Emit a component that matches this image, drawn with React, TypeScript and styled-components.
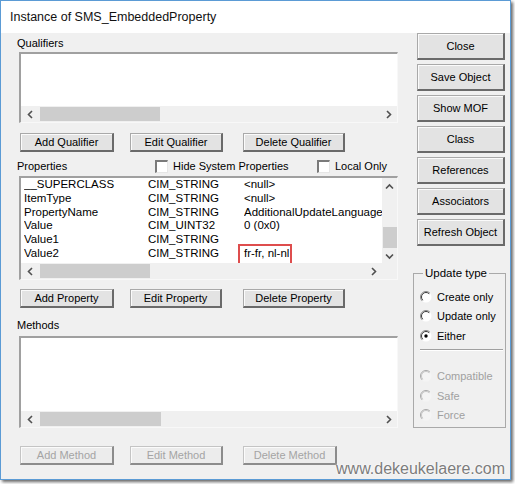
import React from "react";
import styled, { createGlobalStyle } from "styled-components";

const Global = createGlobalStyle`
  html, body { margin: 0; padding: 0; background: #fff; }
  body { font-family: "Liberation Sans", Arial, sans-serif; font-size: 11px; color: #000; }
  * { box-sizing: border-box; }
`;

const Page = styled.div`
  width: 515px;
  height: 484px;
  position: relative;
  background: #fff;
  overflow: hidden;
`;

const Window = styled.div`
  width: 511px;
  height: 480px;
  border: 1px solid #5b9bd5;
  box-shadow: 2px 2px 3px rgba(0, 0, 0, 0.6);
  display: flex;
  flex-direction: column;
  background: #f0f0f0;
`;

const TitleBar = styled.div`
  height: 32px;
  flex: none;
  background: #fff;
  padding-left: 9px;
  display: flex;
  align-items: center;
  font-size: 12.5px;
  color: #111;
`;

const Body = styled.div`
  flex: 1;
  display: grid;
  grid-template-columns: 383px 94px;
  column-gap: 13px;
  padding-left: 16px;
  align-items: start;
`;

const LeftCol = styled.div`
  display: flex;
  flex-direction: column;
`;

const Label = styled.div<{ $top: number }>`
  margin-top: ${(p) => p.$top}px;
  line-height: 14px;
  height: 14px;
`;

const ListBox = styled.div<{ $h: number; $top: number; $vscroll?: boolean }>`
  margin-top: ${(p) => p.$top}px;
  margin-left: 2px;
  width: 379px;
  height: ${(p) => p.$h}px;
  background: #fff;
  border-style: solid;
  border-width: 2px 1px 1px 2px;
  border-color: #a0a0a0 #f8f8f8 #f8f8f8 #a0a0a0;
  display: grid;
  grid-template-columns: ${(p) => (p.$vscroll ? "1fr 15px" : "1fr")};
  grid-template-rows: 1fr 16px;
  overflow: hidden;
`;

const Rows = styled.div`
  overflow: hidden;
  font-size: 11.5px;
`;

const Row = styled.div`
  display: grid;
  grid-template-columns: 124px 96px 1fr;
  padding-left: 3px;
  height: 13.8px;
  line-height: 13.8px;
  white-space: nowrap;
`;

const Cell = styled.div`
  overflow: hidden;
`;

const Boxed = styled.span`
  position: relative;
  display: inline-block;
  &::after {
    content: "";
    position: absolute;
    top: -3px;
    bottom: -4px;
    left: -6px;
    right: -3px;
    border: 2px solid #de4d4d;
  }
`;

const HScroll = styled.div`
  background: #f0f0f0;
  display: flex;
  align-items: center;
  height: 16px;
`;

const ArrowBox = styled.div<{ $w: number; $h?: number }>`
  width: ${(p) => p.$w}px;
  height: ${(p) => p.$h ?? 16}px;
  flex: none;
  display: flex;
  align-items: center;
  justify-content: center;
`;

const HThumb = styled.div<{ $w: number }>`
  width: ${(p) => p.$w}px;
  height: 14px;
  margin-left: 1px;
  background: #cdcdcd;
  flex: none;
`;

const Spacer = styled.div`
  flex: 1;
`;

const VScroll = styled.div`
  background: #f0f0f0;
  display: flex;
  flex-direction: column;
`;

const VTrack = styled.div`
  flex: 1;
  display: flex;
  flex-direction: column;
  justify-content: flex-end;
  align-items: center;
`;

const VThumb = styled.div`
  width: 14px;
  height: 21px;
  background: #cdcdcd;
`;

const Corner = styled.div`
  background: #f0f0f0;
`;

const ButtonRow = styled.div<{ $top: number }>`
  margin-top: ${(p) => p.$top}px;
  padding-left: 3px;
  display: grid;
  grid-template-columns: 110px 113px auto;
  justify-items: start;
`;

const Button = styled.button<{ $w: number; $h?: number; $off?: boolean }>`
  width: ${(p) => p.$w}px;
  height: ${(p) => p.$h ?? 19}px;
  padding: 0;
  margin: 0;
  font-family: "Liberation Sans", Arial, sans-serif;
  font-size: 11px;
  color: ${(p) => (p.$off ? "#a4a4a4" : "#000")};
  background: ${(p) => (p.$off ? "#ececec" : "#e3e3e3")};
  border-style: solid;
  border-width: 1px 2px 2px 1px;
  border-color: ${(p) =>
    p.$off ? "#c4c4c4 #8c8c8c #8c8c8c #c4c4c4" : "#a9a9a9 #6a6a6a #6a6a6a #a9a9a9"};
  box-shadow: inset 1px 1px 0 #fbfbfb;
  text-align: center;
  line-height: 1;
`;

const HeaderRow = styled.div`
  height: 24px;
  padding-top: 4px;
  display: grid;
  grid-template-columns: 138px 162px auto;
  align-items: center;
`;

const CheckItem = styled.label`
  display: flex;
  align-items: center;
  gap: 5px;
  height: 20px;
`;

const CheckBox = styled.span`
  width: 13px;
  height: 13px;
  background: #fff;
  border-style: solid;
  border-width: 2px 1px 1px 2px;
  border-color: #7a7a7a #e6e6e6 #e6e6e6 #7a7a7a;
  flex: none;
`;

const RightCol = styled.div`
  display: flex;
  flex-direction: column;
  gap: 4px;
  align-items: flex-start;
`;

const SideButton = styled(Button)`
  margin-left: 4px;
`;

const Group = styled.fieldset`
  margin: 16px 0 0 0;
  width: 93px;
  height: 162px;
  border: 1px solid #a9a9a9;
  padding: 0 2px 2px 6px;
  min-width: 0;
`;

const Legend = styled.legend`
  padding: 0 2px;
  margin-left: 3px;
  line-height: 14px;
  font-size: 11.5px;
`;

const RadioList = styled.div<{ $top: number }>`
  padding-top: ${(p) => p.$top}px;
  display: flex;
  flex-direction: column;
`;

const RadioRow = styled.div<{ $off?: boolean }>`
  height: 19.5px;
  display: flex;
  align-items: center;
  gap: 5px;
  color: ${(p) => (p.$off ? "#a0a0a0" : "#000")};
`;

const Separator = styled.div`
  margin: 3px 0 16px 0;
  height: 2px;
  border-top: 1px solid #a0a0a0;
  border-bottom: 1px solid #fff;
`;

const Watermark = styled.div`
  position: absolute;
  right: 10px;
  top: 459px;
  font-size: 16px;
  line-height: 20px;
  color: #7c7c7c;
  text-shadow: 0 0 2px #fff, 0 0 2px #fff;
`;

const Chevron = ({ dir }: { dir: "l" | "r" | "u" | "d" }) => {
  const d =
    dir === "l"
      ? "M5 1 L1.5 4.5 L5 8"
      : dir === "r"
      ? "M2 1 L5.5 4.5 L2 8"
      : dir === "u"
      ? "M1 5.5 L4.5 2 L8 5.5"
      : "M1 2.5 L4.5 6 L8 2.5";
  const w = dir === "l" || dir === "r" ? 7 : 9;
  const h = dir === "l" || dir === "r" ? 9 : 8;
  return (
    <svg width={w} height={h} viewBox={`0 0 ${w} ${h}`}>
      <path d={d} fill="none" stroke="#505050" strokeWidth="1.6" />
    </svg>
  );
};

const Radio = ({ checked, off }: { checked?: boolean; off?: boolean }) => (
  <svg width="12" height="12" viewBox="0 0 12 12" style={{ flex: "none" }}>
    <circle cx="6" cy="6" r="5.5" fill={off ? "#f4f4f4" : "#fff"} />
    <path d="M2.1 9.9 A5.5 5.5 0 0 1 9.9 2.1" fill="none" stroke={off ? "#a8a8a8" : "#8a8a8a"} strokeWidth="1" />
    <path d="M2.8 9.2 A4.5 4.5 0 0 1 9.2 2.8" fill="none" stroke={off ? "#c8c8c8" : "#3c3c3c"} strokeWidth="1" />
    {checked && <circle cx="6" cy="6" r="1.7" fill="#000" />}
  </svg>
);

const HBar = ({ thumb, rightPad }: { thumb: number; rightPad?: boolean }) => (
  <HScroll>
    <ArrowBox $w={18}>
      <Chevron dir="l" />
    </ArrowBox>
    <HThumb $w={thumb} />
    <Spacer />
    <ArrowBox $w={17}>
      <Chevron dir="r" />
    </ArrowBox>
    {rightPad ? null : null}
  </HScroll>
);

const props = [
  ["__SUPERCLASS", "CIM_STRING", "<null>"],
  ["ItemType", "CIM_STRING", "<null>"],
  ["PropertyName", "CIM_STRING", "AdditionalUpdateLanguage"],
  ["Value", "CIM_UINT32", "0 (0x0)"],
  ["Value1", "CIM_STRING", ""],
  ["Value2", "CIM_STRING", "fr-fr, nl-nl"],
];

export default function App() {
  return (
    <Page>
      <Global />
      <Window>
        <TitleBar>Instance of SMS_EmbeddedProperty</TitleBar>
        <Body>
          <LeftCol>
            <Label $top={3}>Qualifiers</Label>
            <ListBox $h={71} $top={2}>
              <Rows />
              <HBar thumb={120} />
            </ListBox>
            <ButtonRow $top={10}>
              <Button $w={94}>Add Qualifier</Button>
              <Button $w={93}>Edit Qualifier</Button>
              <Button $w={102}>Delete Qualifier</Button>
            </ButtonRow>
            <HeaderRow>
              <span>Properties</span>
              <CheckItem>
                <CheckBox />
                Hide System Properties
              </CheckItem>
              <CheckItem>
                <CheckBox />
                Local Only
              </CheckItem>
            </HeaderRow>
            <ListBox $h={104} $top={0} $vscroll>
              <Rows>
                {props.map(([n, t, v]) => (
                  <Row key={n}>
                    <Cell>{n}</Cell>
                    <Cell>{t}</Cell>
                    <Cell style={{ overflow: n === "Value2" ? "visible" : "hidden" }}>
                      {n === "Value2" ? <Boxed>{v}</Boxed> : v}
                    </Cell>
                  </Row>
                ))}
              </Rows>
              <VScroll>
                <ArrowBox $w={15} $h={17}>
                  <Chevron dir="u" />
                </ArrowBox>
                <VTrack>
                  <VThumb />
                </VTrack>
                <ArrowBox $w={15} $h={15}>
                  <Chevron dir="d" />
                </ArrowBox>
              </VScroll>
              <HBar thumb={110} />
              <Corner />
            </ListBox>
            <ButtonRow $top={9}>
              <Button $w={94}>Add Property</Button>
              <Button $w={92}>Edit Property</Button>
              <Button $w={102}>Delete Property</Button>
            </ButtonRow>
            <Label $top={10}>Methods</Label>
            <ListBox $h={92} $top={4}>
              <Rows />
              <HBar thumb={121} />
            </ListBox>
            <ButtonRow $top={18}>
              <Button $w={94} $off>Add Method</Button>
              <Button $w={93} $off>Edit Method</Button>
              <Button $w={94} $off>Delete Method</Button>
            </ButtonRow>
          </LeftCol>
          <RightCol>
            <SideButton $w={88} $h={27}>Close</SideButton>
            <SideButton $w={88} $h={27}>Save Object</SideButton>
            <SideButton $w={88} $h={27}>Show MOF</SideButton>
            <SideButton $w={88} $h={27}>Class</SideButton>
            <SideButton $w={88} $h={27}>References</SideButton>
            <SideButton $w={88} $h={27}>Associators</SideButton>
            <SideButton $w={88} $h={27}>Refresh Object</SideButton>
            <Group>
              <Legend>Update type</Legend>
              <RadioList $top={7}>
                <RadioRow>
                  <Radio />
                  Create only
                </RadioRow>
                <RadioRow>
                  <Radio />
                  Update only
                </RadioRow>
                <RadioRow>
                  <Radio checked />
                  Either
                </RadioRow>
                <Separator />
                <RadioRow $off>
                  <Radio off />
                  Compatible
                </RadioRow>
                <RadioRow $off>
                  <Radio off />
                  Safe
                </RadioRow>
                <RadioRow $off>
                  <Radio off />
                  Force
                </RadioRow>
              </RadioList>
            </Group>
          </RightCol>
        </Body>
      </Window>
      <Watermark>www.dekeukelaere.com</Watermark>
    </Page>
  );
}
